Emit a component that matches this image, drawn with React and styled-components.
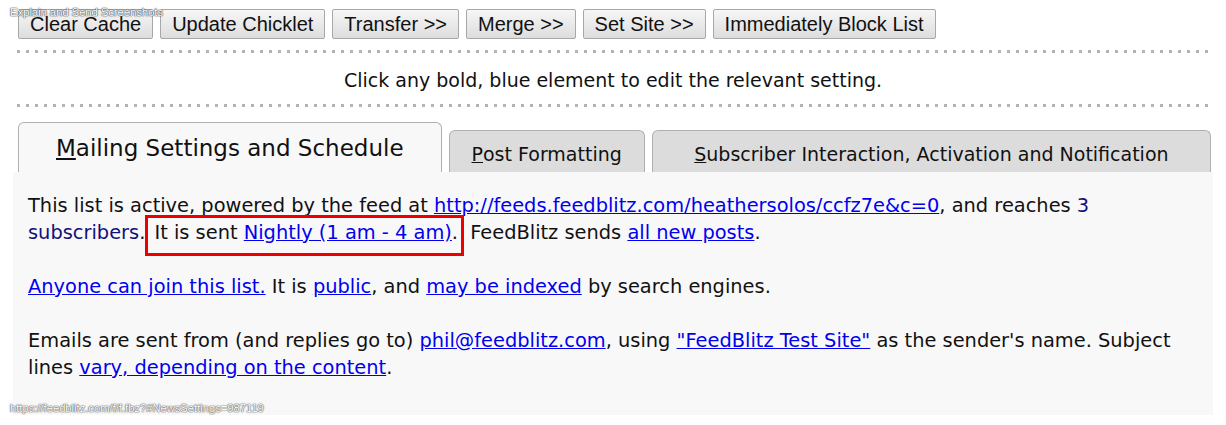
import React from "react";
import styled, { createGlobalStyle } from "styled-components";

const GlobalStyle = createGlobalStyle`
  body {
    margin: 0;
    background: #ffffff;
    font-family: "DejaVu Sans", sans-serif;
  }
`;

export default function App() {
  return (
    <>
      <GlobalStyle />
      <Page>
        <Overlay>Explain and Send Screenshots</Overlay>
        <Toolbar>
          <Button>Clear Cache</Button>
          <Button>Update Chicklet</Button>
          <Button>Transfer &gt;&gt;</Button>
          <Button>Merge &gt;&gt;</Button>
          <Button>Set Site &gt;&gt;</Button>
          <Button>Immediately Block List</Button>
        </Toolbar>
        <Dots />
        <Hint>Click any bold, blue element to edit the relevant setting.</Hint>
        <Dots />
        <Tabs>
          <Tab $active>
            <u>M</u>ailing Settings and Schedule
          </Tab>
          <Tab>
            <u>P</u>ost Formatting
          </Tab>
          <Tab $grow>
            <u>S</u>ubscriber Interaction, Activation and Notification
          </Tab>
        </Tabs>
        <Panel>
          <Para>
            This list is active, powered by the feed at{" "}
            <Link href="#">http://feeds.feedblitz.com/heathersolos/ccfz7e&amp;c=0</Link>, and
            reaches <Plain>3 subscribers</Plain>.<Marked> It is sent{" "}
              <Link href="#">Nightly (1 am - 4 am)</Link>.</Marked> FeedBlitz sends{" "}
            <Link href="#">all new posts</Link>.
          </Para>
          <Para>
            <Link href="#">Anyone can join this list.</Link> It is <Link href="#">public</Link>, and{" "}
            <Link href="#">may be indexed</Link> by search engines.
          </Para>
          <Para>
            Emails are sent from (and replies go to) <Link href="#">phil@feedblitz.com</Link>, using{" "}
            <Link href="#">"FeedBlitz Test Site"</Link> as the sender's name. Subject lines{" "}
            <Link href="#">vary, depending on the content</Link>.
          </Para>
          <Status>https://feedblitz.com/f/f.fbz?#NewsSettings=987119</Status>
        </Panel>
      </Page>
    </>
  );
}

const Page = styled.div`
  position: relative;
  width: 1226px;
  height: 425px;
  overflow: hidden;
  padding: 9px 13px 0 13px;
  box-sizing: border-box;
`;

const Overlay = styled.div`
  position: absolute;
  left: 10px;
  top: 5px;
  font-family: "Liberation Sans", Arial, sans-serif;
  font-size: 11.6px;
  color: #ffffff;
  text-shadow: 0 0 1px #444, 0 0 1px #444, 0 0 2px #777;
  letter-spacing: -0.2px;
`;

const Toolbar = styled.div`
  display: flex;
  gap: 7px;
  padding-left: 5px;
`;

const Button = styled.button`
  height: 30px;
  padding: 0 11px;
  font-family: "Liberation Sans", Arial, sans-serif;
  font-size: 20px;
  color: #111;
  background: linear-gradient(#f6f6f6, #dddddd);
  border: 1px solid #a8a8a8;
  border-radius: 2px;
`;

const Dots = styled.div`
  height: 3px;
  margin: 11px 0 0 4px;
  width: 1197px;
  background-image: linear-gradient(to right, #b4b4b4 3px, transparent 3px);
  background-size: 9px 3px;
`;

const Hint = styled.div`
  text-align: center;
  font-size: 19px;
  line-height: 22px;
  color: #111;
  padding: 16px 0 2px;
`;

const Tabs = styled.div`
  display: flex;
  align-items: flex-end;
  gap: 7px;
  margin-top: 15px;
  padding-left: 5px;
  width: 1193px;
`;

const Tab = styled.div`
  box-sizing: border-box;
  height: ${(p) => (p.$active ? "50px" : "42px")};
  flex: ${(p) => (p.$grow ? "1" : "none")};
  padding: ${(p) => (p.$active ? "0 37px" : "4px 22px 0")};
  display: flex;
  align-items: center;
  justify-content: center;
  white-space: nowrap;
  font-size: ${(p) => (p.$active ? "23px" : "19px")};
  color: #111;
  background: ${(p) => (p.$active ? "#f8f8f8" : "#dcdcdc")};
  border: 1px solid #b0b0b0;
  border-bottom: none;
  border-radius: 6px 6px 0 0;
`;

const Panel = styled.div`
  position: relative;
  background: #f8f8f8;
  width: 1200px;
  height: 243px;
  padding: 20px 20px 0 15px;
  box-sizing: border-box;
`;

const Para = styled.p`
  margin: 0 0 27px;
  font-size: 19.4px;
  line-height: 27px;
  color: #111;
`;

const Link = styled.a`
  color: #0000ee;
  text-decoration: underline;
`;

const Plain = styled.span`
  color: #10107a;
`;

const Marked = styled.span`
  border: 3px solid #ee0000;
  padding: 3px 3px 9px 0;
`;

const Status = styled.div`
  position: absolute;
  left: -3px;
  bottom: 1px;
  font-family: "Liberation Sans", Arial, sans-serif;
  font-size: 11.2px;
  color: #ffffff;
  text-shadow: 0 0 1px #555, 0 0 1px #555, 0 0 2px #888;
`;
